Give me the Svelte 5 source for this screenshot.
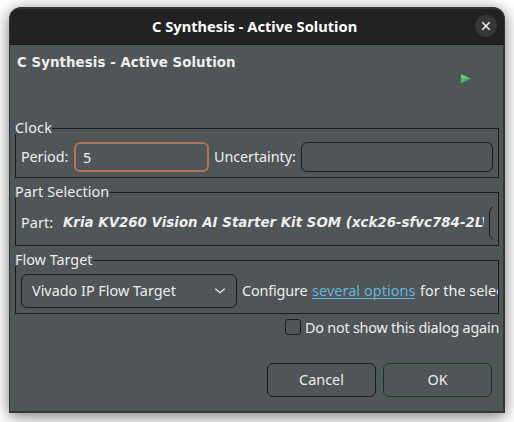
<script>
  let period = $state('5');
  let uncertainty = $state('');
</script>

<main>
  <div class="dialog">
    <header>
      <span class="title">C Synthesis - Active Solution</span>
      <button class="close" aria-label="Close">
        <svg width="22" height="22" viewBox="0 0 22 22"><path d="M7.3 7.3l7.4 7.4M14.7 7.3l-7.4 7.4" /></svg>
      </button>
    </header>
    <div class="body">
      <div class="banner">
        <h1>C Synthesis - Active Solution</h1>
        <svg class="run" width="12" height="12" viewBox="0 0 12 12">
          <defs>
            <linearGradient id="g" x1="0" y1="0" x2="0" y2="1">
              <stop offset="0" stop-color="#a9cf98" /><stop offset=".45" stop-color="#7cc47c" /><stop offset=".55" stop-color="#3fae63" /><stop offset="1" stop-color="#8ad080" />
            </linearGradient>
          </defs>
          <path d="M.9 .9V10.3L11.2 5.6z" fill="url(#g)" stroke="#1c8a50" stroke-width=".8" />
        </svg>
      </div>

      <section class="group clock">
        <span class="legend lg-clock">Clock</span>
        <label for="period" class="l-period">Period:</label>
        <input id="period" class="focus" bind:value={period} />
        <label for="unc" class="l-unc">Uncertainty:</label>
        <input id="unc" class="wide" bind:value={uncertainty} />
      </section>

      <section class="group part">
        <span class="legend lg-part">Part Selection</span>
        <span class="l-part">Part:</span>
        <span class="device">Kria KV260 Vision AI Starter Kit SOM (xck26-sfvc784-2LV</span>
        <span class="clip"><button class="more" aria-label="Browse"></button></span>
      </section>

      <section class="group flow">
        <span class="legend lg-flow">Flow Target</span>
        <button class="select">
          <span class="l-select">Vivado IP Flow Target</span>
          <svg width="12" height="8" viewBox="0 0 12 8"><path d="M1.3 1.7L6 5.8L10.7 1.7" /></svg>
        </button>
        <div class="hint">
          <span class="l-conf">Configure</span>
          <span class="link">several options</span>
          <span class="l-for">for the selec</span>
        </div>
      </section>

      <label class="again"><span class="box"></span><span class="l-again">Do not show this dialog again</span></label>
      <footer>
        <button class="btn"><span class="l-cancel">Cancel</span></button>
        <button class="btn ok"><span class="l-ok">OK</span></button>
      </footer>
    </div>
  </div>
</main>

<style>
  main {
    box-sizing: border-box;
    width: 514px;
    height: 422px;
    padding: 7px 9px 9px;
    overflow: hidden;
    background: #fff;
    font: 14.4px/18px "Noto Sans", sans-serif;
    color: #eeeeec;
    white-space: nowrap;
  }
  * { box-sizing: border-box; }
  button, input { font: inherit; color: inherit; background: none; padding: 0; margin: 0; outline: none; letter-spacing: inherit; }
  .dialog {
    width: 496px;
    height: 406px;
    border-radius: 12px 12px 0 0;
    background: #505557;
    box-shadow: 0 3px 16px rgba(0, 0, 0, .55);
    overflow: hidden;
    display: flex;
    flex-direction: column;
  }
  header {
    height: 38px;
    flex: none;
    background: #222;
    border: 1px solid #343434;
    border-top: 2px solid #353535;
    border-bottom: 1px solid #181818;
    border-radius: 12px 12px 0 0;
    display: grid;
    grid-template-columns: 142px 1fr 22px;
    align-items: center;
    padding-right: 7px;
  }
  .title { grid-column: 2; font-size: 14.67px; font-weight: 700; color: #fff; margin-bottom: 2px; }
  .close { width: 22px; height: 22px; border: 0; border-radius: 50%; background: #373737; display: flex; margin-bottom: 1px; }
  .close path { stroke: #f2f2f2; stroke-width: 1.5; fill: none; }
  .body {
    flex: 1;
    display: flex;
    flex-direction: column;
    border: solid #343635;
    border-width: 0 2px 2px 1px;
    padding: 0 4px 0 5px;
  }
  .banner { height: 83px; flex: none; display: flex; justify-content: space-between; padding: 9px 27px 0 2px; }
  h1 { margin: 0; font: 700 13.33px/18px "DejaVu Sans", sans-serif; letter-spacing: .08px; }
  .run { margin-top: 19px; }
  .group {
    position: relative;
    flex: none;
    width: 484px;
    border: 1px solid #191b1c;
    display: flex;
    align-items: center;
    padding: 8px 0 0 5px;
  }
  .clock { height: 50px; margin-bottom: 14px; }
  .part { height: 54px; margin-bottom: 14px; }
  .flow { height: 54px; }
  .legend { position: absolute; left: -1px; top: -10px; height: 15px; line-height: 18px; background: #505557; }
  .lg-clock { width: 37px; letter-spacing: .2px; }
  .lg-part { width: 94px; letter-spacing: .1px; }
  .lg-flow { width: 78px; }
  .l-period { width: 53px; letter-spacing: -.1px; }
  .l-unc { width: 87px; letter-spacing: -.08px; }
  input { width: 135px; height: 30px; border: 1px solid #191b1c; border-radius: 6px; padding: 0 7px; margin-right: 5px; }
  .focus { border: 2px solid #b3705a; }
  .wide { width: 192px; margin: 0; }
  .l-part { width: 42px; letter-spacing: .1px; }
  .device { width: 421px; overflow: hidden; font: italic 700 13.33px/18px "DejaVu Sans", sans-serif; letter-spacing: .035px; }
  .clip { width: 4px; height: 34px; margin-left: 5px; overflow: hidden; }
  .more { display: block; width: 34px; height: 34px; border: 1px solid #191b1c; border-radius: 6px; }
  .select {
    width: 216px; height: 34px; flex: none;
    border: 1px solid #191b1c; border-radius: 6px;
    display: flex; align-items: center; justify-content: space-between;
    padding: 0 10px;
  }
  .select path { stroke: #eee; stroke-width: 1.2; fill: none; }
  .hint { display: flex; width: 256px; margin-left: 5px; overflow: hidden; }
  .l-conf { width: 70px; flex: none; letter-spacing: -.15px; }
  .link { width: 103px; height: 17px; flex: none; color: #64b5de; border-bottom: 1px solid #64b5de; margin-right: 5px; letter-spacing: .08px; }
  .again { display: flex; align-items: center; margin: 4px 0 0 270px; height: 18px; }
  .box { width: 16px; height: 16px; border: 1px solid #191b1c; border-radius: 3px; margin-right: 4px; flex: none; }
  .l-again { letter-spacing: -.22px; padding-top: 2px; }
  footer { display: flex; gap: 7px; margin: 27px 0 0 252px; }
  .btn { width: 109px; height: 34px; border: 1px solid #191b1c; border-radius: 6px; }
  .ok { border-color: #123f1b; }
</style>
